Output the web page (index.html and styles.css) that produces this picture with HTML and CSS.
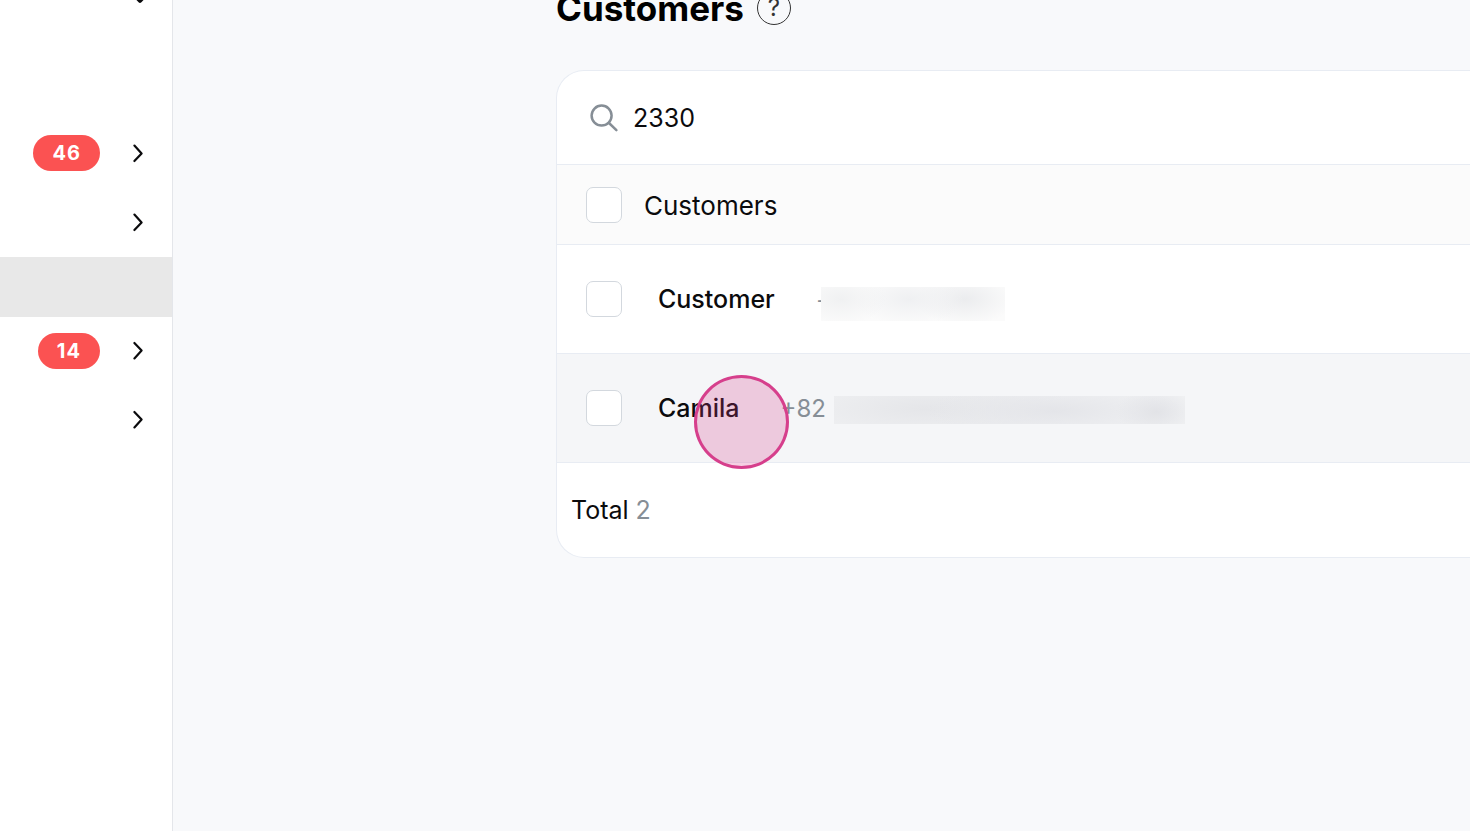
FILE: index.html
```html
<!DOCTYPE html>
<html lang="en">
<head>
    <meta charset="UTF-8" />
    <meta name="viewport" content="width=device-width, initial-scale=1" />
    <title>Customers</title>
    <link rel="stylesheet" href="styles.css">
</head>
<body>
    <nav class="sidebar">
        <button class="nav-toggle" aria-label="Toggle menu">
            <svg class="chevron-down" viewBox="0 0 18 12" width="18" height="12"><path d="M1.5 2 9 9.8 16.5 2" /></svg>
        </button>
        <a class="nav-item" href="#">
            <span class="badge">46</span>
            <svg class="chevron" viewBox="0 0 12 20" width="12" height="20"><path d="M2.4 2.6 9.6 10.4 2.4 18" /></svg>
        </a>
        <a class="nav-item" href="#" aria-label="Expand section">
            <svg class="chevron" viewBox="0 0 12 20" width="12" height="20"><path d="M2.4 2.6 9.6 10.4 2.4 18" /></svg>
        </a>
        <a class="nav-item active" href="#" aria-label="Current page"></a>
        <a class="nav-item" href="#">
            <span class="badge">14</span>
            <svg class="chevron" viewBox="0 0 12 20" width="12" height="20"><path d="M2.4 2 9.6 9.6 2.4 17.4" /></svg>
        </a>
        <a class="nav-item" href="#" aria-label="Expand section">
            <svg class="chevron" viewBox="0 0 12 20" width="12" height="20"><path d="M2.4 2 9.6 9.6 2.4 17.4" /></svg>
        </a>
    </nav>

    <main class="main">
        <header class="page-header">
            <h1>Customers</h1>
            <button class="help" aria-label="Help">?</button>
        </header>

        <section class="card">
            <div class="search">
                <svg viewBox="0 0 30 30" width="30" height="30"><circle cx="12.6" cy="12.6" r="10" /><path d="M20 20 27.4 27.2" /></svg>
                <input type="text" aria-label="Search customers" value="2330" />
            </div>

            <table class="customers">
                <thead>
                    <tr>
                        <th class="check"><input type="checkbox" aria-label="Select all" /></th>
                        <th>Customers</th>
                    </tr>
                </thead>
                <tbody>
                    <tr>
                        <td class="check"><input type="checkbox" id="customer1" /></td>
                        <td>
                            <div class="customer">
                                <label for="customer1">Customer</label>
                                <span class="phone">+<span class="redacted short"></span></span>
                            </div>
                        </td>
                    </tr>
                    <tr class="hovered">
                        <td class="check"><input type="checkbox" id="customer2" /></td>
                        <td>
                            <div class="customer">
                                <label for="customer2">Camila</label>
                                <span class="phone">+82<span class="redacted long"></span></span>
                                <span class="click-marker"></span>
                            </div>
                        </td>
                    </tr>
                </tbody>
            </table>

            <div class="total">Total <span>2</span></div>
        </section>
    </main>
</body>
</html>
```
FILE: styles.css
```css
* {
    box-sizing: border-box;
}
body {
    margin: 0;
    display: flex;
    min-height: 100vh;
    overflow: hidden;
    font-family: Inter, "Liberation Sans", sans-serif;
    font-size: 25px;
    color: #0b0b0d;
    background-color: #f8f9fb;
}
button {
    padding: 0;
    border: none;
    background: none;
    font-family: inherit;
}
svg {
    display: block;
    fill: none;
    stroke: #0b0b0d;
    stroke-width: 2.2;
    stroke-linecap: round;
    stroke-linejoin: round;
}

/* sidebar */
.sidebar {
    flex: 0 0 173px;
    background-color: #fff;
    border-right: 1px solid #e4e6ea;
}
.nav-toggle {
    display: block;
    margin: -9px 23px 120px auto;
}
.chevron-down {
    stroke-width: 4;
}
.nav-item {
    display: flex;
    align-items: center;
    justify-content: flex-end;
    gap: 32px;
    height: 60px;
    margin-bottom: 9px;
    padding-right: 28px;
    text-decoration: none;
}
.nav-item.active {
    margin: -4px 0 4px;
    background-color: #e8e8e8;
}
.badge {
    padding: 0 19px;
    border-radius: 18px;
    background-color: #fb5252;
    color: #fff;
    font-size: 20px;
    font-weight: 700;
    line-height: 36px;
    letter-spacing: 1px;
}

/* page */
.main {
    flex: 1;
    min-width: 0;
    padding-left: 383px;
}
.page-header {
    display: flex;
    align-items: center;
    gap: 13px;
    height: 34px;
    margin: -9px 0 45px;
}
h1 {
    margin: 0;
    font-size: 35px;
    font-weight: 700;
    color: #000;
}
.help {
    width: 34px;
    height: 34px;
    border: 1px solid #333;
    border-radius: 50%;
    font-size: 24px;
    line-height: 32px;
    color: #333;
}
.card {
    border: 1px solid #e8ecf3;
    border-right: none;
    border-radius: 28px 0 0 28px;
    background-color: #fff;
    overflow: hidden;
}
.search {
    display: flex;
    align-items: center;
    gap: 14px;
    height: 93px;
    padding-left: 32px;
}
.search svg {
    stroke: #868e96;
    stroke-width: 2.5;
}
.search input {
    flex: 1;
    padding: 1px 0 0;
    border: none;
    outline: none;
    font: inherit;
    color: inherit;
}

/* table */
.customers {
    width: 100%;
    border-collapse: separate;
    border-spacing: 0;
}
.customers th,
.customers td {
    height: 109px;
    padding: 0 0 0 14px;
    border-top: 1px solid #e8ecf3;
    text-align: left;
}
.customers th {
    height: 80px;
    padding: 2px 0 0;
    background-color: #fbfbfb;
    font-size: 26px;
    font-weight: 400;
}
.customers .check {
    width: 87px;
    padding: 0 0 0 29px;
}
.check input {
    appearance: none;
    display: block;
    width: 36px;
    height: 36px;
    margin: 0;
    border: 1px solid #d3d8de;
    border-radius: 7px;
    background-color: #fff;
}
.customers .hovered td {
    background-color: #f5f6f8;
}
.customer {
    position: relative;
    display: flex;
    align-items: center;
    gap: 41px;
    font-weight: 500;
}
.phone {
    display: flex;
    align-items: center;
    font-size: 24px;
    font-weight: 400;
    color: #868e96;
}
.redacted.short {
    width: 184px;
    height: 34px;
    margin: 10px 0 0 -11px;
    background:
        radial-gradient(ellipse 46px 26px at 20px 12px, #f0f1f2, transparent),
        radial-gradient(ellipse 56px 26px at 88px 12px, #eff0f2, transparent),
        radial-gradient(ellipse 50px 26px at 144px 12px, #ebecee, transparent),
        #fbfbfb;
}
.redacted.long {
    width: 351px;
    height: 28px;
    margin: 3px 0 0 8px;
    background:
        radial-gradient(ellipse 40px 24px at 322px 16px, #e2e3e7, transparent),
        radial-gradient(ellipse 130px 28px at 220px 15px, #e4e5e9, transparent),
        radial-gradient(ellipse 150px 34px at 90px 13px, #e5e6e9, transparent),
        #f0f1f3;
}
.click-marker {
    position: absolute;
    top: 50%;
    left: 36px;
    width: 95px;
    height: 94px;
    margin-top: -33px;
    border: 3px solid #d63f8c;
    border-radius: 50%;
    background-color: rgba(214, 60, 139, 0.24);
    pointer-events: none;
}
.total {
    padding: 0 14px;
    border-top: 1px solid #e8ecf3;
    line-height: 94px;
}
.total span {
    color: #868e96;
}
```
